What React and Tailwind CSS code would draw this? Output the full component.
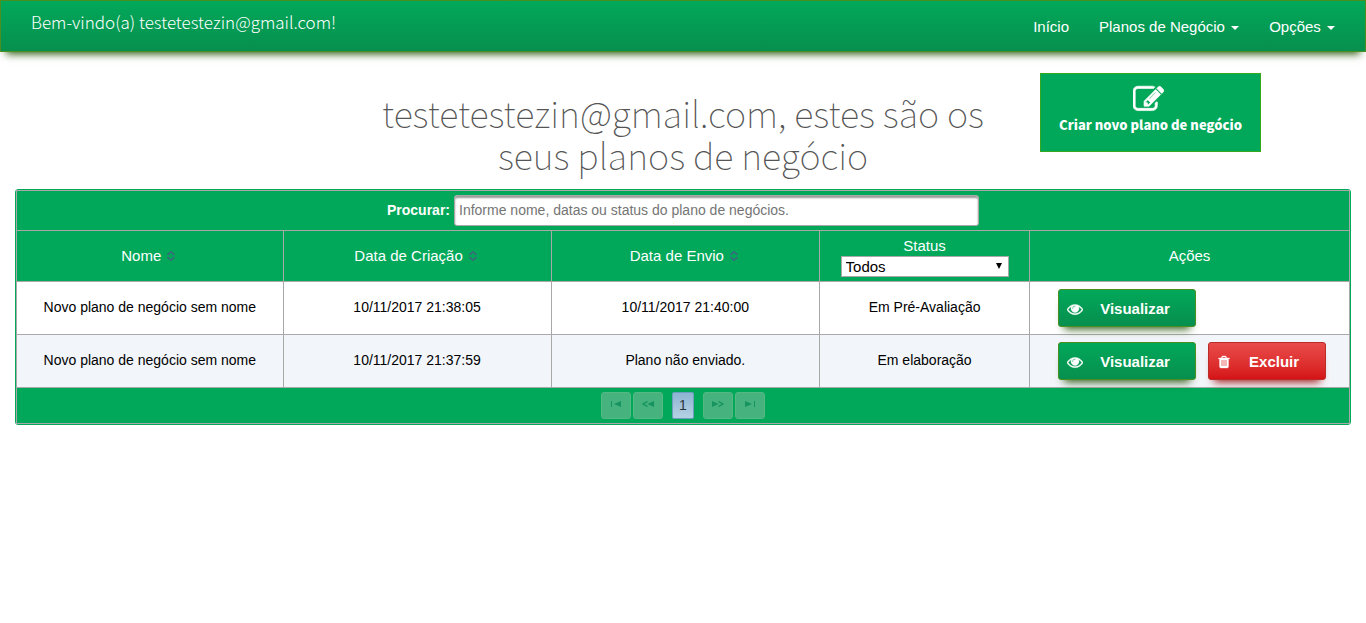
import React from "react";

const SOURCE = "font-['Noto_Sans_CJK_SC','Open_Sans',sans-serif]";

const EYE =
  "M1664 960q-152-236-381-353 61 104 61 225 0 185-131.5 316.5t-316.5 131.5-316.5-131.5-131.5-316.5q0-121 61-225-229 117-381 353 133 205 333.5 326.5t434.5 121.5 434.5-121.5 333.5-326.5zm-720-384q0-20-14-34t-34-14q-125 0-214.5 89.5t-89.5 214.5q0 20 14 34t34 14 34-14 14-34q0-86 61-147t147-61q20 0 34-14t14-34zm848 384q0 34-20 69-140 230-376.5 368.5t-499.5 138.5-499.5-139-376.5-368q-20-35-20-69t20-69q140-229 376.5-368t499.5-139 499.5 139 376.5 368q20 35 20 69z";
const PENCIL =
  "M888 1184l116-116-152-152-116 116v56h96v96h56zm440-720q-16-16-33 1l-350 350q-17 17-1 33t33-1l350-350q17-17 1-33zm80 594v190q0 119-84.5 203.5t-203.5 84.5h-832q-119 0-203.5-84.5t-84.5-203.5v-832q0-119 84.5-203.5t203.5-84.5h832q63 0 117 25 15 7 18 23 3 17-9 29l-49 49q-14 14-32 8-23-6-45-6h-832q-66 0-113 47t-47 113v832q0 66 47 113t113 47h832q66 0 113-47t47-113v-126q0-13 9-22l64-64q15-15 35-7t20 29zm-96-738l288 288-672 672h-288v-288zm444 132l-92 92-288-288 92-92q28-28 68-28t68 28l152 152q28 28 28 68t-28 68z";
const TRASH =
  "M704 1376v-704q0-14-9-23t-23-9h-64q-14 0-23 9t-9 23v704q0 14 9 23t23 9h64q14 0 23-9t9-23zm256 0v-704q0-14-9-23t-23-9h-64q-14 0-23 9t-9 23v704q0 14 9 23t23 9h64q14 0 23-9t9-23zm256 0v-704q0-14-9-23t-23-9h-64q-14 0-23 9t-9 23v704q0 14 9 23t23 9h64q14 0 23-9t9-23zm-544-992h448l-48-117q-7-9-17-11h-317q-10 2-17 11zm928 32v64q0 14-9 23t-23 9h-96v948q0 83-47 143.5t-113 60.5h-832q-66 0-113-58.5t-47-141.5v-952h-96q-14 0-23-9t-9-23v-64q0-14 9-23t23-9h309l70-167q15-37 54-63t79-26h320q40 0 79 26t54 63l70 167h309q14 0 23 9t9 23z";

function Icon({ path, className }) {
  return (
    <svg viewBox="0 0 1792 1792" fill="currentColor" stroke="currentColor" strokeWidth="40" className={className} aria-hidden="true">
      <path d={path} />
    </svg>
  );
}

function Caret() {
  return <span className="ml-[2px] inline-block border-x-4 border-t-4 border-x-transparent border-t-white align-middle" />;
}

function SortIcon() {
  return (
    <svg viewBox="0 0 8 10" className="ml-[6px] h-[10px] w-2" fill="none" stroke="#3a6a7c" strokeWidth="1.6" aria-hidden="true">
      <path d="M0.500 4 4 0.800 7.500 4M0.500 6 4 9.200 7.500 6" />
    </svg>
  );
}

function SortHeader({ children }) {
  return (
    <th className="border border-[#a8a8a8] p-0 pr-[3px] font-normal">
      <button type="button" className="inline-flex items-center">
        {children}
        <SortIcon />
      </button>
    </th>
  );
}

function ViewButton() {
  return (
    <button
      type="button"
      className="flex h-[38px] w-[138px] items-center rounded-[3px] border border-[#4a8f1f] bg-linear-to-b from-[#01a85a] to-[#078f4e] pt-[2px] pr-2 pl-2 text-[15px] font-bold text-white shadow-[0_8px_8px_-6px_#2d5a12]"
    >
      <Icon path={EYE} className="h-4 w-4" />
      <span className="flex-1 text-center">Visualizar</span>
    </button>
  );
}

function DeleteButton() {
  return (
    <button
      type="button"
      className="flex h-[38px] w-[118px] items-center rounded-[3px] border border-[#b92c28] bg-linear-to-b from-[#e94a4a] to-[#d51216] pt-[2px] pr-2 pl-2 text-[15px] font-bold text-white shadow-[0_8px_8px_-6px_#a01414]"
    >
      <Icon path={TRASH} className="h-[14px] w-[14px]" />
      <span className="flex-1 text-center">Excluir</span>
    </button>
  );
}

function PageButton({ label, children }) {
  return (
    <button
      type="button"
      disabled
      aria-label={label}
      className="flex h-[27px] w-[30px] items-center justify-center rounded-[3px] border border-[#53b882] bg-[#46b27e] pb-1"
    >
      <svg viewBox="0 0 12 6" className="h-[6px] w-3" fill="#16935f" aria-hidden="true">
        {children}
      </svg>
    </button>
  );
}

const ROWS = [
  { name: "Novo plano de negócio sem nome", created: "10/11/2017 21:38:05", sent: "10/11/2017 21:40:00", status: "Em Pré-Avaliação", removable: false },
  { name: "Novo plano de negócio sem nome", created: "10/11/2017 21:37:59", sent: "Plano não enviado.", status: "Em elaboração", removable: true },
];

const CELL = "border border-[#a8a8a8] p-0";
const TEXT_CELL = "border border-[#a8a8a8] p-0 pb-[2px]";

export default function App() {
  return (
    <div className="font-['Liberation_Sans',Arial,sans-serif] text-sm text-black">
      <header className="flex h-[52px] items-center justify-between border border-[#4a8f1f] bg-linear-to-b from-[#01a85a] to-[#078f4e] px-[30px] text-white shadow-[0_8px_8px_-6px_#2d5a12]">
        <p className={`${SOURCE} pb-2 text-[17px] leading-6 font-light`}>Bem-vindo(a) testetestezin@gmail.com!</p>
        <nav className="flex items-center gap-[30px] pt-[2px] text-[15px]">
          <a href="#inicio">Início</a>
          <a href="#planos">Planos de Negócio <Caret /></a>
          <a href="#opcoes">Opções <Caret /></a>
        </nav>
      </header>

      <main className="px-[15px]">
        <div className="grid grid-cols-4 pt-[21px]">
          <h1 className={`${SOURCE} col-span-2 col-start-2 px-[15px] pt-[18px] text-center text-[36px] leading-[42px] font-thin text-[#555555]`}>
            testetestezin@gmail.com, estes são os seus planos de negócio
          </h1>
          <div className="pl-[23px]">
            <button
              type="button"
              className={`${SOURCE} flex h-[79px] w-[221px] flex-col items-center border border-[#35a81d] bg-[#01a85a] pt-[10px] text-[13px] leading-5 font-black text-white`}
            >
              <Icon path={PENCIL} className="mr-1 h-[31px] w-[31px]" />
              <span>Criar novo plano de negócio</span>
            </button>
          </div>
        </div>

        <div className="mt-[14px] rounded-[3px] border border-[#01a85a]">
          <table className="w-full table-fixed border-collapse text-center">
            <colgroup>
              <col className="w-[20%]" />
              <col className="w-[20.1%]" />
              <col className="w-[20.15%]" />
              <col className="w-[15.75%]" />
              <col className="w-[24%]" />
            </colgroup>
            <thead className="bg-[#01a85a] text-[15px] text-white">
              <tr className="h-10">
                <th colSpan={5} className={`${CELL} text-sm`}>
                  <div className="flex items-center justify-center gap-1">
                    <label htmlFor="search" className="pb-[2px] font-bold">Procurar:</label>
                    <input
                      id="search"
                      type="text"
                      placeholder="Informe nome, datas ou status do plano de negócios."
                      className="h-[31px] w-[525px] rounded-[3px] border border-[#a8a8a8] bg-white px-1 pb-[2px] font-normal text-black shadow-[inset_0_2px_2px_#999999] placeholder:text-[#757575]"
                    />
                  </div>
                </th>
              </tr>
              <tr className="h-[51px]">
                <SortHeader>Nome</SortHeader>
                <SortHeader>Data de Criação</SortHeader>
                <SortHeader>Data de Envio</SortHeader>
                <th className={`${CELL} font-normal`}>
                  <label htmlFor="status" className="block leading-5">Status</label>
                  <div className="relative mx-auto w-[168px]">
                    <select id="status" className="block h-[21px] w-full appearance-none border border-[#a9a9a9] bg-white px-1 text-[15px] leading-[19px] text-black">
                      <option>Todos</option>
                      <option>Em elaboração</option>
                      <option>Em Pré-Avaliação</option>
                    </select>
                    <svg viewBox="0 0 6 6" className="pointer-events-none absolute top-[7px] right-[7px] h-[6px] w-[6px]" aria-hidden="true">
                      <path d="M0 0h6L3 6z" />
                    </svg>
                  </div>
                </th>
                <th className={`${CELL} font-normal`}>Ações</th>
              </tr>
            </thead>
            <tbody>
              {ROWS.map((row) => (
                <tr key={row.created} className="h-[53px] even:bg-[#f2f5f9]">
                  <td className={TEXT_CELL}>{row.name}</td>
                  <td className={TEXT_CELL}>{row.created}</td>
                  <td className={TEXT_CELL}>{row.sent}</td>
                  <td className={TEXT_CELL}>{row.status}</td>
                  <td className={CELL}>
                    <div className="flex gap-3 pl-7">
                      <ViewButton />
                      {row.removable && <DeleteButton />}
                    </div>
                  </td>
                </tr>
              ))}
            </tbody>
            <tfoot className="bg-[#01a85a]">
              <tr className="h-9">
                <td colSpan={5} className={CELL}>
                  <div className="flex items-center justify-center gap-[9px]">
                    <div className="flex gap-[2px]">
                      <PageButton label="Primeira página">
                        <path d="M1 0h1v6H1zM11 0v6L4 3z" />
                      </PageButton>
                      <PageButton label="Página anterior">
                        <path d="M5.500 0.500 1 3 5.500 5.500" fill="none" stroke="#16935f" strokeWidth="1.400" />
                        <path d="M12 0v6L5.500 3z" />
                      </PageButton>
                    </div>
                    <button type="button" className="h-[27px] w-[22px] rounded-[2px] border border-[#6f9dbd] bg-linear-to-b from-[#8db4d2] to-[#b5d2e4] pb-[2px] text-[#2e3436]">1</button>
                    <div className="flex gap-[2px]">
                      <PageButton label="Próxima página">
                        <path d="M0 0v6l6.500-3z" />
                        <path d="M6.500 0.500 11 3 6.500 5.500" fill="none" stroke="#16935f" strokeWidth="1.400" />
                      </PageButton>
                      <PageButton label="Última página">
                        <path d="M1 0v6l7-3zM10 0h1v6h-1z" />
                      </PageButton>
                    </div>
                  </div>
                </td>
              </tr>
            </tfoot>
          </table>
        </div>
      </main>
    </div>
  );
}
